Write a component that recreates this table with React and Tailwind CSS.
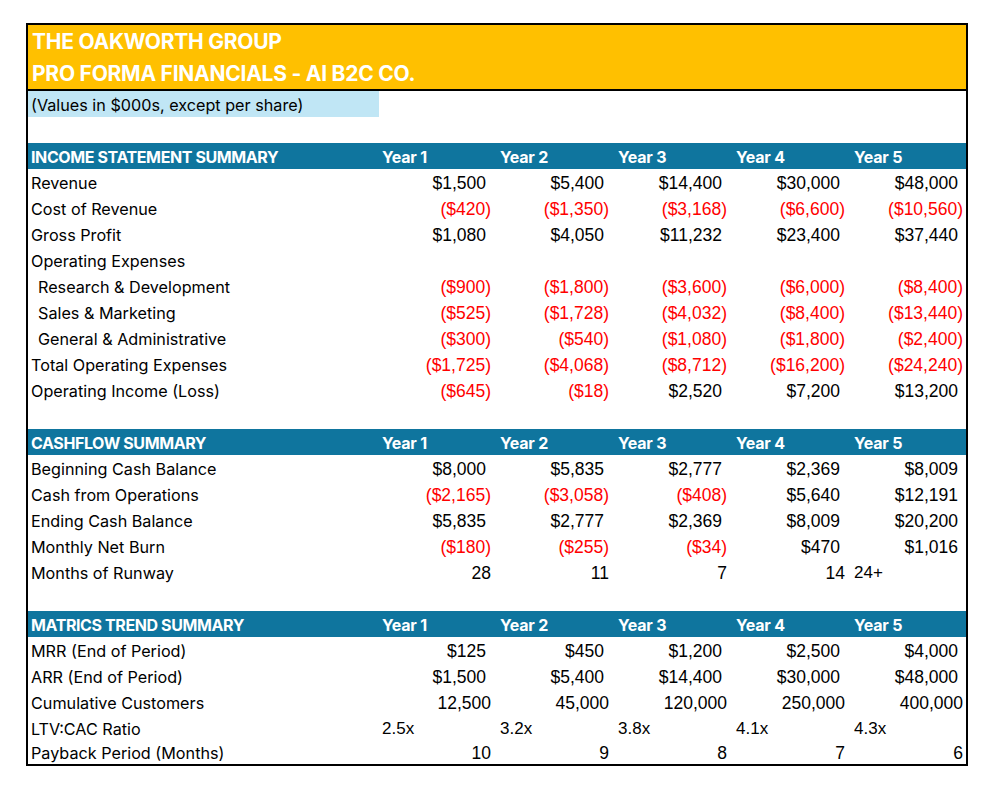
import React from "react";

const LABEL = "font-['Inter','Noto_Sans',sans-serif]";
const NUM = "font-['Liberation_Sans',Arial,sans-serif]";

const years = ["Year 1", "Year 2", "Year 3", "Year 4", "Year 5"];

const income = [
  { label: "Revenue", vals: ["$1,500", "$5,400", "$14,400", "$30,000", "$48,000"] },
  { label: "Cost of Revenue", vals: ["($420)", "($1,350)", "($3,168)", "($6,600)", "($10,560)"] },
  { label: "Gross Profit", vals: ["$1,080", "$4,050", "$11,232", "$23,400", "$37,440"] },
  { label: "Operating Expenses", vals: ["", "", "", "", ""] },
  { label: "Research & Development", indent: true, vals: ["($900)", "($1,800)", "($3,600)", "($6,000)", "($8,400)"] },
  { label: "Sales & Marketing", indent: true, vals: ["($525)", "($1,728)", "($4,032)", "($8,400)", "($13,440)"] },
  { label: "General & Administrative", indent: true, vals: ["($300)", "($540)", "($1,080)", "($1,800)", "($2,400)"] },
  { label: "Total Operating Expenses", vals: ["($1,725)", "($4,068)", "($8,712)", "($16,200)", "($24,240)"] },
  { label: "Operating Income (Loss)", vals: ["($645)", "($18)", "$2,520", "$7,200", "$13,200"] },
];

const cashflow = [
  { label: "Beginning Cash Balance", vals: ["$8,000", "$5,835", "$2,777", "$2,369", "$8,009"] },
  { label: "Cash from Operations", vals: ["($2,165)", "($3,058)", "($408)", "$5,640", "$12,191"] },
  { label: "Ending Cash Balance", vals: ["$5,835", "$2,777", "$2,369", "$8,009", "$20,200"] },
  { label: "Monthly Net Burn", vals: ["($180)", "($255)", "($34)", "$470", "$1,016"] },
  { label: "Months of Runway", plain: true, vals: ["28", "11", "7", "14", "24+"], leftLast: true },
];

const metrics = [
  { label: "MRR (End of Period)", vals: ["$125", "$450", "$1,200", "$2,500", "$4,000"] },
  { label: "ARR (End of Period)", vals: ["$1,500", "$5,400", "$14,400", "$30,000", "$48,000"] },
  { label: "Cumulative Customers", plain: true, vals: ["12,500", "45,000", "120,000", "250,000", "400,000"] },
  { label: "LTV:CAC Ratio", left: true, vals: ["2.5x", "3.2x", "3.8x", "4.1x", "4.3x"] },
  { label: "Payback Period (Months)", plain: true, last: true, vals: ["10", "9", "8", "7", "6"] },
];

const Cell = ({ value, plain, left, last }) => {
  const neg = value.startsWith("(");
  const h = last ? "h-[23px]" : "h-[26px]";
  if (left) {
    return (
      <div className={`${h} flex items-center pt-[2px] pl-[6px] text-[17px] text-black ${NUM}`}>
        {value}
      </div>
    );
  }
  return (
    <div
      className={`${h} flex items-center justify-end pt-[2px] text-[17.5px] ${NUM} ${
        neg ? "text-[#ff0000] pr-[3px]" : plain ? "text-black pr-[3px]" : "text-black pr-[8px]"
      }`}
    >
      {value}
    </div>
  );
};

const SectionHeader = ({ title }) => (
  <>
    <div
      className={`h-[26px] bg-[#0f759e] flex items-center pt-[2px] pl-[3px] text-white font-bold text-[16px] tracking-[-0.4px] ${LABEL}`}
    >
      {title}
    </div>
    {years.map((y) => (
      <div
        key={y}
        className={`h-[26px] bg-[#0f759e] flex items-center pt-[2px] pl-[6px] text-white font-bold text-[16px] tracking-[-0.2px] ${LABEL}`}
      >
        {y}
      </div>
    ))}
  </>
);

const Rows = ({ rows }) =>
  rows.map((r) => (
    <React.Fragment key={r.label}>
      <div
        className={`${r.last ? "h-[23px]" : "h-[26px]"} flex items-center pt-[2px] text-[16.2px] text-black ${LABEL} ${
          r.indent ? "pl-[10px]" : "pl-[3px]"
        }`}
      >
        {r.label}
      </div>
      {r.vals.map((v, i) => (
        <Cell
          key={i}
          value={v}
          plain={r.plain}
          last={r.last}
          left={r.left || (r.leftLast && i === 4)}
        />
      ))}
    </React.Fragment>
  ));

const Blank = () => <div className="col-span-6 h-[26px]" />;

export default function App() {
  return (
    <div className="w-[998px] h-[798px] bg-white pt-[23px] pl-[26px]">
      <div className="w-[942px] border-2 border-black">
        <div className="h-[66px] bg-[#ffc000] border-b-2 border-black flex flex-col justify-center pt-[1px] pl-[4px]">
          <div className={`text-white font-bold text-[21px] leading-[32px] tracking-[-0.25px] ${LABEL}`}>
            THE OAKWORTH GROUP
          </div>
          <div className={`text-white font-bold text-[21px] leading-[32px] tracking-[-0.25px] ${LABEL}`}>
            PRO FORMA FINANCIALS - AI B2C CO.
          </div>
        </div>
        <div className="grid grid-cols-[348px_repeat(5,118px)]">
          <div
            className={`h-[26px] mr-[-3px] bg-[#c0e6f5] flex items-center pt-[2px] pl-[3px] text-[16.2px] text-black ${LABEL}`}
          >
            (Values in $000s, except per share)
          </div>
          <div className="col-span-5 h-[26px]" />
          <Blank />
          <SectionHeader title="INCOME STATEMENT SUMMARY" />
          <Rows rows={income} />
          <Blank />
          <SectionHeader title="CASHFLOW SUMMARY" />
          <Rows rows={cashflow} />
          <Blank />
          <SectionHeader title="MATRICS TREND SUMMARY" />
          <Rows rows={metrics} />
        </div>
      </div>
    </div>
  );
}
